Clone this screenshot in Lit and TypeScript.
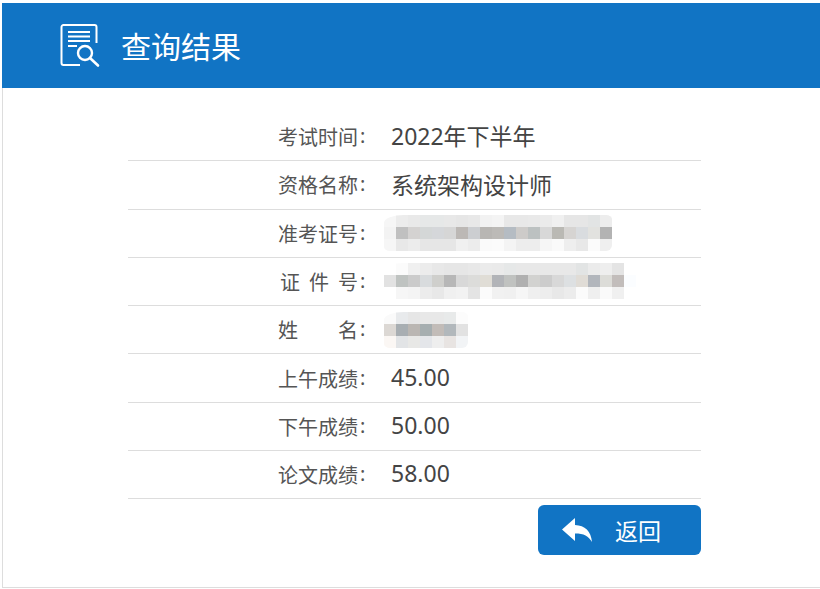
import { LitElement, html, css, nothing } from 'lit';
import { customElement } from 'lit/decorators.js';
import { classMap } from 'lit/directives/class-map.js';

type Row = { label: string; indent?: boolean; value?: string; mosaic?: string[][] };

// blurred-out personal data, 12px cells, three rows
const ticketMosaic = [
    ['f6f6f6', 'ececec', 'e9e9e9', 'e6e8e8', 'e6e8e8', 'e8e8e8', 'e6e6e6', 'e8e8e8', 'f2f2f2', 'f4f4f4', 'e8e8e8', 'e8e8e8', 'e9e9e9', 'ebebeb', 'f0f0f0', 'e6e6e6', 'e6e6e6', 'e2e4e4', 'ededed'],
    ['f3f3f3', 'c0c0c0', 'd4d2d1', 'd4d7d7', 'd5d7da', 'd6d6d6', 'bcb8b5', 'ccced1', 'b8b6b3', 'bcbab7', 'b5bcc3', 'cdcbc9', 'bcc1c1', 'd8d8d8', 'bab9b4', 'd6d4d2', 'd9dcdf', 'e2e2df', 'b3b3b3'],
    ['f6f6f6', 'e8e8e8', 'ececec', 'e6e6e6', 'e6e6e6', 'e6e6e6', 'f0f0f0', 'ececec', 'fafafa', 'fbfbfb', 'f4f4f4', 'ededed', 'ededed', 'f6f6f6', 'fafafa', 'eeeeee', 'e8e8e8', 'fbfbfb', 'efefef'],
];
const idMosaic = [
    ['ffffff', 'fbfbfb', 'f0f0f0', 'ececec', 'e8e8e8', 'e6e6e6', 'e6e6e6', 'e8e8e8', 'ebebeb', 'eaeaea', 'e6e8e8', 'e8e8e8', 'e8e8e8', 'e8e8e8', 'e8e8e8', 'e8e8e8', 'e2e4e4', 'ebebeb', 'eeeeee', 'e4e4e4', 'ffffff'],
    ['e2e2e2', 'bfc3c1', 'cbcbcb', 'd8dbdd', 'cfcfcc', 'b7b7b7', 'd8d8d8', 'dcdcda', 'e0ddd6', 'b2b4b8', 'c0c2c0', 'b0b0b0', 'd2d2d0', 'cccccc', 'd8d8d8', 'dde0e2', 'e0dcd6', 'b2b6bc', 'dcdcd8', 'c2bdbb', 'fbfdff'],
    ['ffffff', 'f6f6f6', 'f4f4f4', 'ececec', 'e8e8e8', 'f0f0f0', 'f2f2f2', 'e4e4e4', 'fbfbfb', 'f1f1f1', 'f0f0f0', 'f6f6f6', 'efefef', 'ededed', 'e8e8e8', 'ececec', 'fbfbfb', 'efefef', 'fafafa', 'f0f0f0', 'ffffff'],
];
const nameMosaic = [
    ['fafafa', 'e8eaec', 'e6e6e6', 'e8e8e8', 'e8e8e8', 'e8eaea', 'fcfcfc'],
    ['dcd8d4', 'a8aeb2', 'bab6b2', 'a6aeb0', 'c2bcb8', 'b2b8bc', 'e2e2e2'],
    ['fbf7f4', 'e2e4e6', 'e8e8e6', 'e4e6ea', 'eeeeee', 'e8e4e2', 'f2f4f6'],
];

const rows: Row[] = [
    { label: '考试时间', value: '2022年下半年' },
    { label: '资格名称', value: '系统架构设计师' },
    { label: '准考证号', mosaic: ticketMosaic },
    { label: '证 件 号', indent: true, mosaic: idMosaic },
    { label: '姓 名', mosaic: nameMosaic },
    { label: '上午成绩', value: '45.00' },
    { label: '下午成绩', value: '50.00' },
    { label: '论文成绩', value: '58.00' },
];

@customElement('app-root')
export class AppRoot extends LitElement {
    static styles = css`
    :host {
        display: block;
        height: 589px;
        overflow: hidden;
        padding: 3px 0 0 2px;
        box-sizing: border-box;
        background: #fff;
        font-family: "Noto Sans", "Noto Sans CJK SC", sans-serif;
    }
    .panel {
        height: 585px;
        box-sizing: border-box;
        border-left: 1px solid #ddd;
        border-bottom: 1px solid #ddd;
    }
    .header {
        height: 85px;
        margin-left: -1px;
        padding-left: 58px;
        display: flex;
        align-items: center;
        gap: 19px;
        background: #1174c4;
        color: #fff;
        font-size: 30px;
    }
    .header svg { display: block; }
    .header span { margin-bottom: 2px; }
    .content {
        width: 573px;
        margin-left: 125px;
        padding-top: 24.95px;
    }
    .row {
        height: 48.3px;
        box-sizing: border-box;
        display: flex;
        align-items: center;
        border-bottom: 1px solid #ddd;
    }
    .label {
        width: 100px;
        margin-left: 150px;
        display: flex;
        font-size: 20px;
        color: #555;
        white-space: nowrap;
    }
    .label-text {
        width: 80px;
        box-sizing: border-box;
        text-align: justify;
        text-align-last: justify;
    }
    .label-text.indent { padding-left: 2px; }
    .colon { margin-left: 2px; }
    .value {
        margin: 0 0 2.6px 13px;
        font-size: 23px;
        color: #444;
        white-space: nowrap;
    }
    .mosaic {
        margin-left: 6px;
        border-radius: 20px 6px 6px 6px / 8px 4px 6px 4px;
        overflow: hidden;
    }
    .mosaic-line { display: flex; }
    .mosaic-line span { width: 12px; height: 12px; }
    .actions {
        display: flex;
        justify-content: flex-end;
        padding-top: 5.65px;
    }
    .back {
        width: 163px;
        height: 50px;
        box-sizing: border-box;
        padding-left: 24px;
        display: flex;
        align-items: center;
        gap: 23px;
        border-radius: 6px;
        background: #1174c4;
        color: #fff;
        font-size: 23px;
    }
    .back svg { display: block; }
  `;

    renderMosaic(lines: string[][]) {
        return html`<div class="mosaic">
        ${lines.map(line => html`<div class="mosaic-line">
          ${line.map(c => html`<span style="background:#${c}"></span>`)}
        </div>`)}
      </div>`;
    }

    render() {
        return html`
      <div class="panel">
        <div class="header">
          <svg width="42" height="44" viewBox="0 0 42 44" fill="none" stroke="#fff">
            <path d="M20 41H3.500a2 2 0 0 1-2-2V3a2 2 0 0 1 2-2h31a2 2 0 0 1 2 2v16" stroke-width="2"/>
            <path d="M8 8h22M8 12.500h22M8 17h22M8 22h9" stroke-width="2"/>
            <circle cx="25" cy="29" r="7" stroke-width="2.400"/>
            <path d="M30 34l8 7.500" stroke-width="2.600" stroke-linecap="round"/>
          </svg>
          <span>查询结果</span>
        </div>
        <div class="content">
          ${rows.map(r => html`
            <div class="row">
              <div class="label">
                <span class=${classMap({ 'label-text': true, indent: !!r.indent })}>${r.label}</span>
                <span class="colon">:</span>
              </div>
              ${r.mosaic ? this.renderMosaic(r.mosaic) : nothing}
              ${r.value ? html`<div class="value">${r.value}</div>` : nothing}
            </div>`)}
          <div class="actions">
            <div class="back">
              <svg width="30" height="24" viewBox="0 0 30 24" fill="#fff">
                <path d="M0 11.500L13 0v7c10 .5 16 6 17 17-3.500-6-8-8.500-17-8.500V23z"/>
              </svg>
              <span>返回</span>
            </div>
          </div>
        </div>
      </div>
    `;
    }
}
